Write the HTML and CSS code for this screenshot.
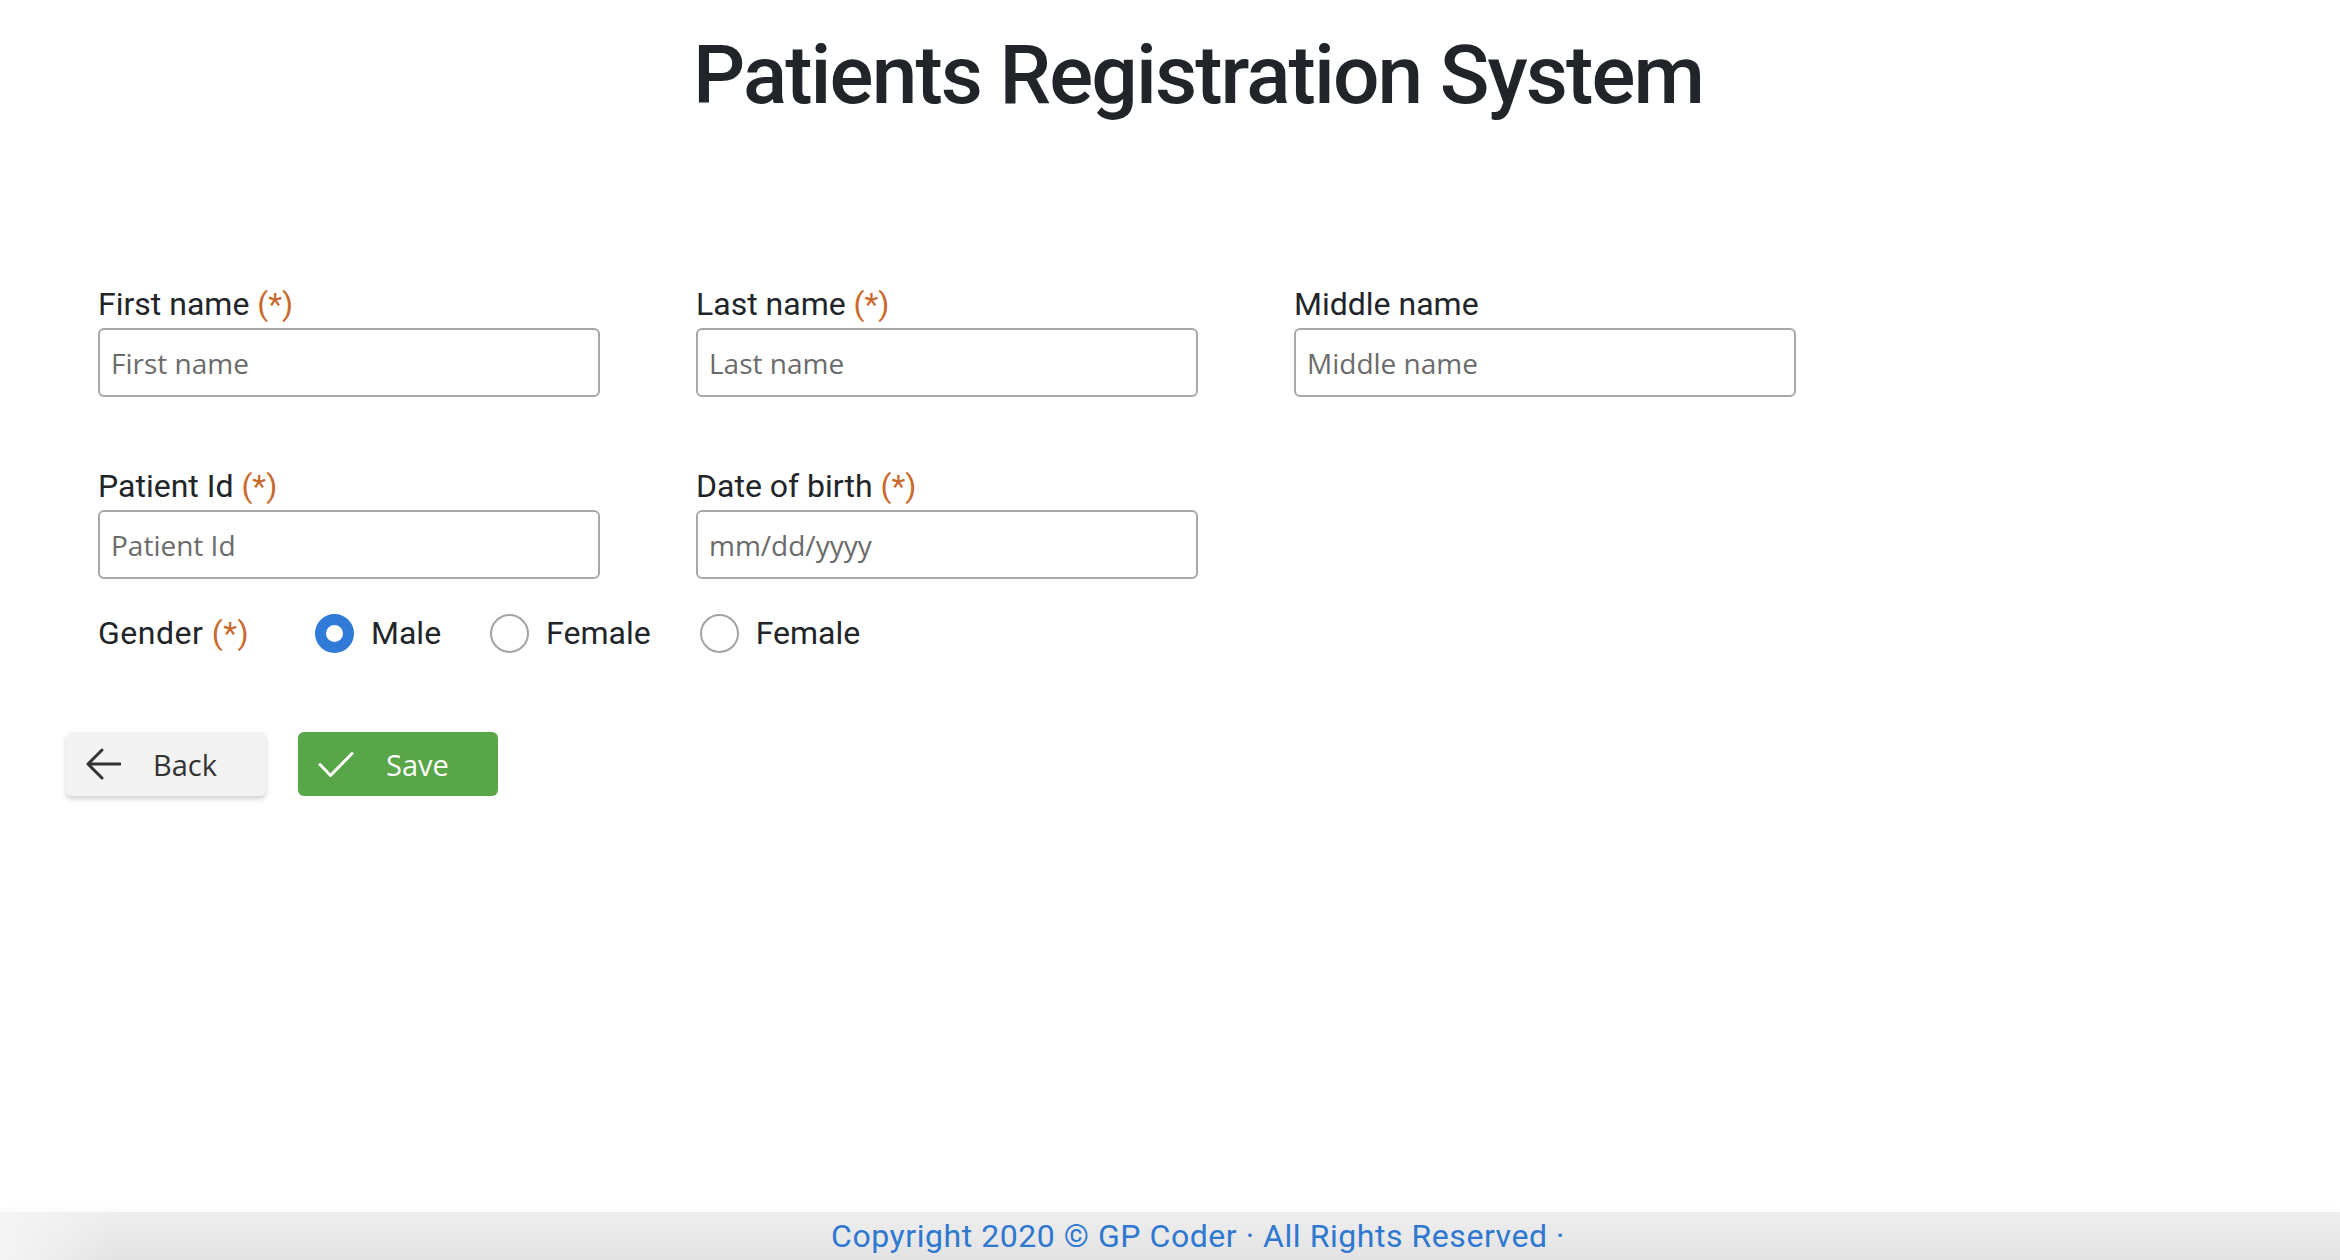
FILE: index.html
```html
<!DOCTYPE html>
<html lang="en">
<head>
<meta charset="utf-8">
<title>Patients Registration System</title>
<link rel="stylesheet" href="styles.css">
</head>
<body>
<div class="page">
  <header class="header">
    <h1 class="title">Patients Registration System</h1>
  </header>
  <main class="content">
    <form class="form">
      <div class="grid">
        <div class="field">
          <label class="label">First name <span class="req">(*)</span></label>
          <input class="input" type="text" placeholder="First name">
        </div>
        <div class="field">
          <label class="label">Last name <span class="req">(*)</span></label>
          <input class="input" type="text" placeholder="Last name">
        </div>
        <div class="field">
          <label class="label">Middle name</label>
          <input class="input" type="text" placeholder="Middle name">
        </div>
      </div>
      <div class="grid row2">
        <div class="field">
          <label class="label">Patient Id <span class="req">(*)</span></label>
          <input class="input" type="text" placeholder="Patient Id">
        </div>
        <div class="field">
          <label class="label">Date of birth <span class="req">(*)</span></label>
          <input class="input" type="text" placeholder="mm/dd/yyyy">
        </div>
      </div>
      <div class="gender">
        <span class="gender-label">Gender <span class="req">(*)</span></span>
        <label class="option"><input class="radio" type="radio" name="g" checked><span>Male</span></label>
        <label class="option"><input class="radio" type="radio" name="g"><span>Female</span></label>
        <label class="option"><input class="radio" type="radio" name="g"><span>Female</span></label>
      </div>
      <div class="actions">
        <button type="button" class="btn btn-back">
          <svg class="icon" width="36" height="32" viewBox="0 0 36 32"><path d="M35 16H3 M17 2 L3 16 L17 30" fill="none" stroke="#333" stroke-width="3" stroke-linecap="round" stroke-linejoin="round"/></svg>
          <span>Back</span>
        </button>
        <button type="button" class="btn btn-save">
          <svg class="icon" width="36" height="27" viewBox="0 0 36 27"><path d="M2 13.5 L12.5 24.5 L34 2.5" fill="none" stroke="#fff" stroke-width="3" stroke-linecap="round" stroke-linejoin="round"/></svg>
          <span>Save</span>
        </button>
      </div>
    </form>
  </main>
  <footer class="footer">
    <span class="copy">Copyright 2020 © GP Coder · All Rights Reserved ·</span>
  </footer>
</div>
</body>
</html>
```

FILE: styles.css
```css
* { box-sizing: border-box; }
html, body { margin: 0; padding: 0; }
body {
  font-family: Roboto, "Liberation Sans", Arial, sans-serif;
  color: #212529;
  background: #fff;
}
.page {
  min-height: 100vh;
  display: flex;
  flex-direction: column;
}
.header {
  padding-left: 56px;
}
.title {
  margin: 26px 0 0;
  text-align: center;
  font-size: 82px;
  line-height: 98px;
  font-weight: 500;
  letter-spacing: -1.9px;
  color: #212529;
}
.content {
  padding-left: 98px;
  margin-top: 156px;
}
.grid {
  display: grid;
  grid-template-columns: repeat(3, 502px);
  column-gap: 96px;
}
.row2 { margin-top: 65px; }
.field { display: flex; flex-direction: column; }
.label {
  font-size: 32px;
  line-height: 48px;
  color: #212529;
}
.req { color: #c96a2c; }
.input {
  width: 502px;
  height: 69px;
  border: 2px solid #a8a8a8;
  border-radius: 6px;
  padding: 0 11px;
  font-family: "Open Sans", "Liberation Sans", sans-serif;
  font-size: 28px;
  color: #333;
  background: #fff;
  outline: none;
}
.input::placeholder { color: #6b6b6b; opacity: 1; }
.gender {
  margin-top: 30px;
  display: flex;
  align-items: center;
  height: 48px;
  font-size: 32px;
  line-height: 48px;
}
.gender-label { width: 217px; letter-spacing: 0.5px; }
.option {
  display: flex;
  align-items: center;
  gap: 17px;
  margin-right: 49px;
}
.radio {
  appearance: none;
  -webkit-appearance: none;
  margin: 0;
  width: 39px;
  height: 39px;
  border-radius: 50%;
  border: 2px solid #a3a3a3;
  background: #fff;
}
.radio:checked {
  border: 11px solid #2f7bd7;
  background: #fff;
}
.actions {
  margin-top: 75px;
  margin-left: -32px;
  display: flex;
  gap: 32px;
}
.btn {
  width: 200px;
  height: 64px;
  border: none;
  border-radius: 6px;
  display: flex;
  align-items: center;
  gap: 32px;
  padding: 0 0 0 19px;
  font-family: "Open Sans", "Liberation Sans", sans-serif;
  font-size: 29px;
  cursor: pointer;
}
.btn-back {
  background: #f3f3f3;
  color: #333;
  box-shadow: 0 3px 5px rgba(0, 0, 0, 0.18);
}
.btn-save {
  background: #58a647;
  color: #fff;
  padding-left: 20px;
}
.icon { flex: none; display: block; }
.footer {
  margin-top: auto;
  height: 48px;
  padding-left: 56px;
  display: flex;
  justify-content: center;
  align-items: center;
  background: linear-gradient(90deg, rgba(245,245,245,1) 0, rgba(245,245,245,0) 120px), linear-gradient(180deg, #eeeeee, #e3e3e3);
  box-shadow: 0 -4px 8px rgba(0, 0, 0, 0.02);
}
.copy {
  font-size: 32px;
  line-height: 48px;
  letter-spacing: 0.55px;
  color: #2f78d1;
}
```
